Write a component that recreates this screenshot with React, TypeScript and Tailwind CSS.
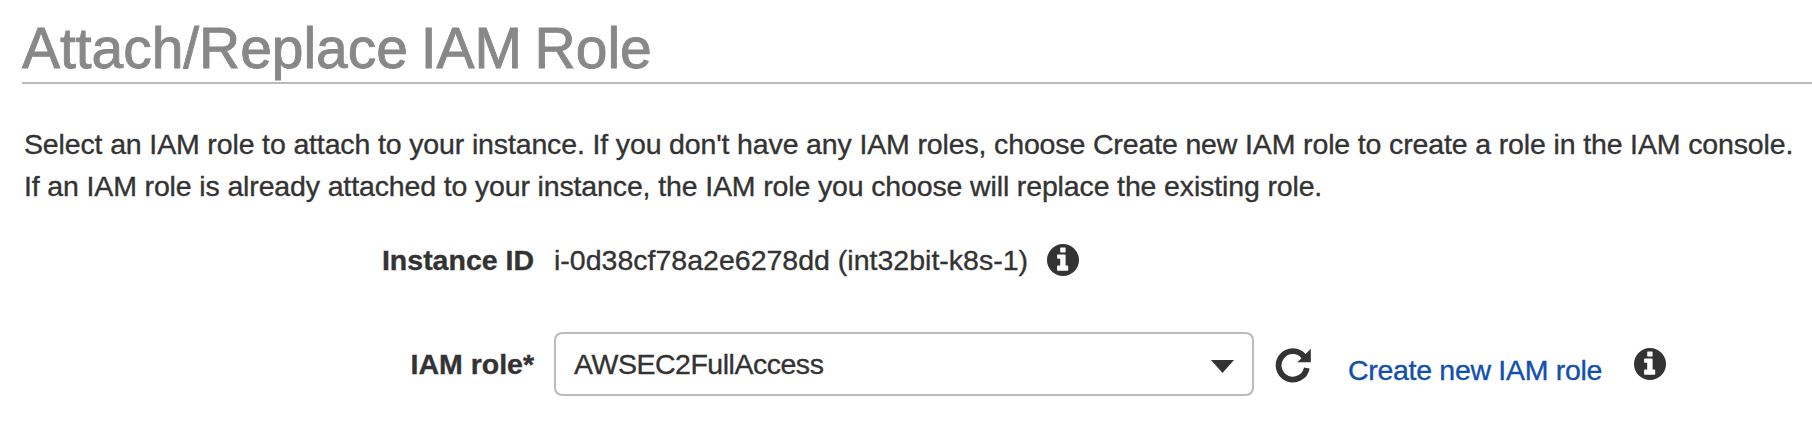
function InfoIcon() {
  return (
    <svg viewBox="0 0 32 32" className="size-8 shrink-0" aria-label="Info">
      <circle cx="16" cy="16" r="16" fill="#333" />
      <g fill="#fff">
        <rect x="13.2" y="3.4" width="5.4" height="5" rx="0.6" />
        <path d="M10.8 10.4h7.1q.7 0 .7.7v10.5h1.9q.7 0 .7.7v3.7q0 .7-.7.7h-9.7q-.7 0-.7-.7v-3.7q0-.7.7-.7h2.4v-6.8h-2.4q-.7 0-.7-.7v-3q0-.7.7-.7z" />
      </g>
    </svg>
  );
}

function RefreshIcon() {
  return (
    <svg viewBox="0 0 36 36" className="size-9 shrink-0" aria-label="Refresh">
      <path d="M31.8 20.9A14.2 14.2 0 1 1 29 9.6" fill="none" stroke="#333" strokeWidth="5.8" />
      <path d="M35.8 1.8v13.4H22.4z" fill="#333" />
    </svg>
  );
}

export default function App() {
  return (
    <main className="flex h-[440px] w-full flex-col overflow-hidden bg-white pl-[22px] font-['Liberation_Sans',Arial,sans-serif] text-[28.5px] leading-[42px] whitespace-nowrap text-[#333] [-webkit-text-stroke:0.35px_currentColor]">
      <h1 className="h-[84px] shrink-0 border-b-2 border-[#bbb] pt-[17px] text-[57px] leading-[62px] tracking-[-0.05px] [word-spacing:-3px] text-[#888] [-webkit-text-stroke:0.9px_currentColor]">
        Attach/Replace IAM Role
      </h1>

      <p className="mt-[39px] pl-0.5 tracking-[-0.14px]">
        Select an IAM role to attach to your instance. If you don't have any IAM roles, choose Create new IAM role to create a role in the IAM console.
        <br />
        If an IAM role is already attached to your instance, the IAM role you choose will replace the existing role.
      </p>

      <div className="mt-8 flex h-[42px] items-center">
        <span className="w-[512px] text-right font-bold">Instance ID</span>
        <span className="ml-5 w-[493px] tracking-[0.01px]">i-0d38cf78a2e6278dd (int32bit-k8s-1)</span>
        <InfoIcon />
      </div>

      <div className="mt-[51px] flex h-16 items-center">
        <label className="w-[512px] text-right font-bold">IAM role*</label>
        <button type="button" className="ml-5 flex h-16 w-[700px] shrink-0 items-center justify-between rounded-lg border-2 border-[#bbb] bg-white pr-[18px] pl-[18px] tracking-[-0.48px]">
          AWSEC2FullAccess
          <svg viewBox="0 0 23 13" className="mt-1 h-[13px] w-[23px]">
            <path d="M0 0h23L11.5 13z" fill="#333" />
          </svg>
        </button>
        <div className="mt-0.5 ml-[21px] flex">
          <RefreshIcon />
        </div>
        <a className="mt-3 ml-[37px] w-[286px] tracking-[-0.3px] text-[#1150ae]">Create new IAM role</a>
        <InfoIcon />
      </div>
    </main>
  );
}
